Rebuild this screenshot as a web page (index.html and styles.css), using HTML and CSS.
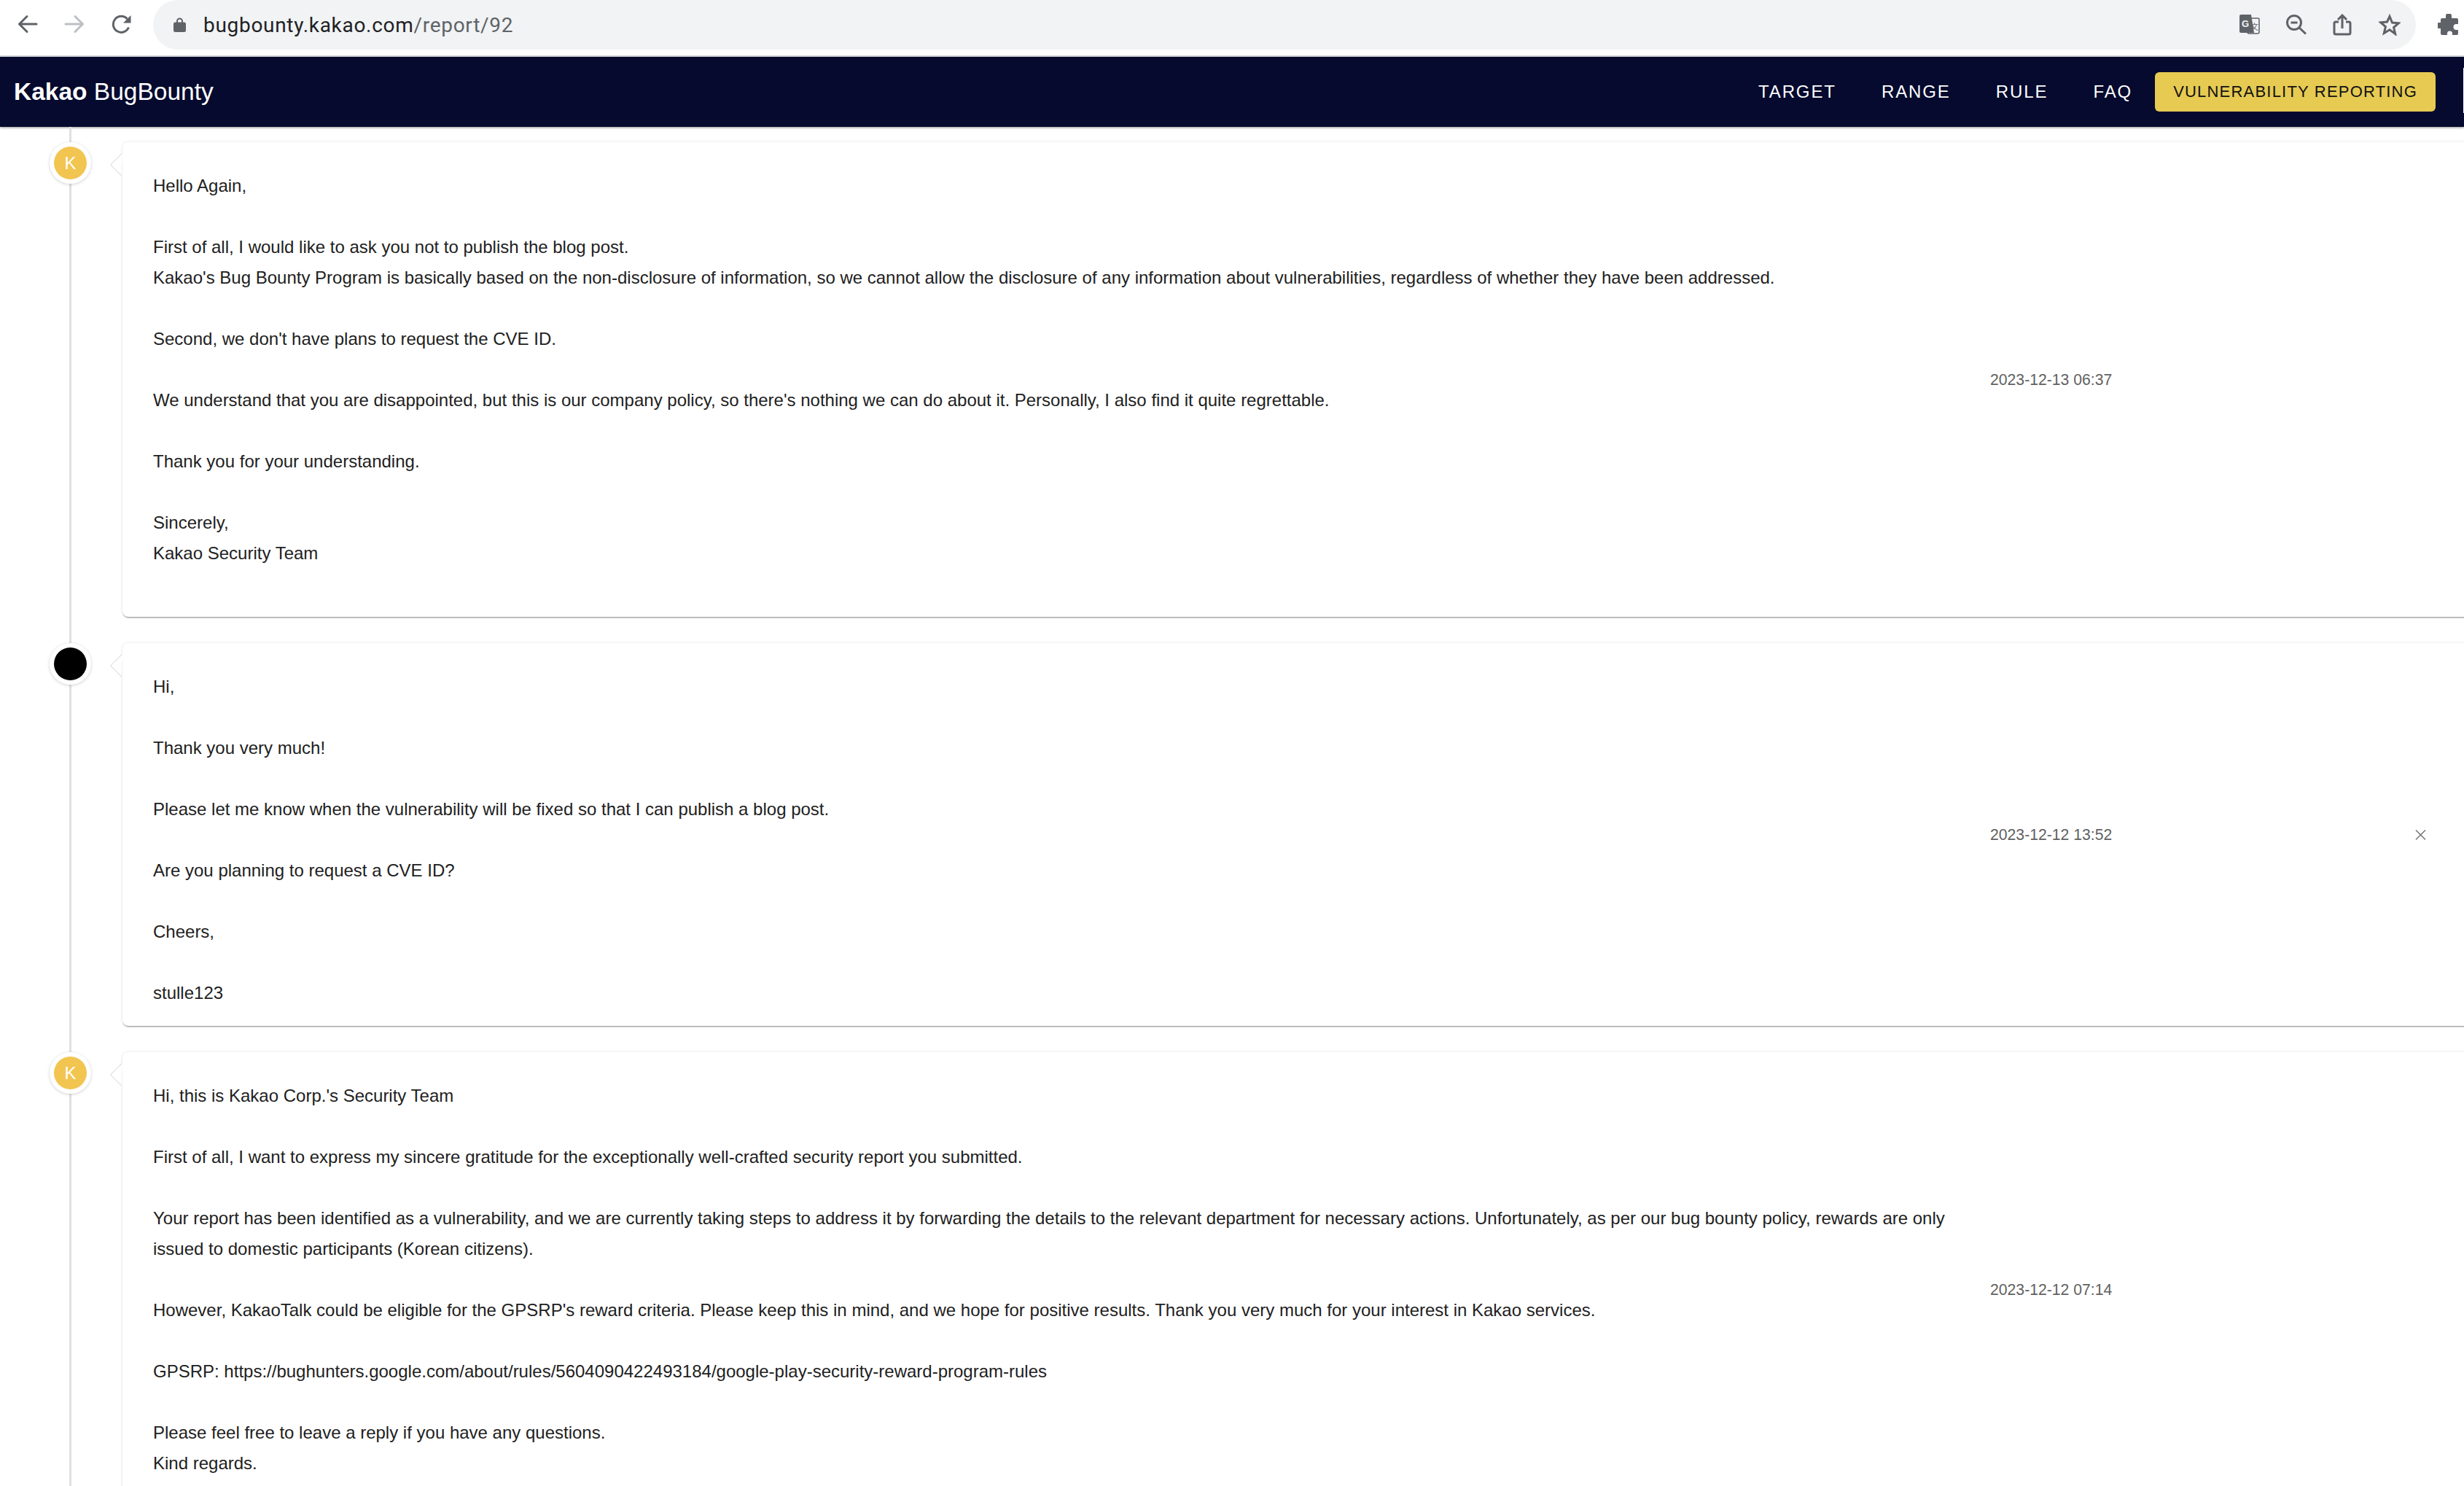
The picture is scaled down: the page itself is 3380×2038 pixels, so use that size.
FILE: index.html
```html
<!DOCTYPE html>
<html lang="en">
<head>
    <meta charset="UTF-8">
    <title>Kakao BugBounty</title>
    <link rel="stylesheet" href="styles.css">
</head>
<body>

    <!-- Browser toolbar -->
    <div class="toolbar">
        <svg class="tool-icon" viewBox="0 0 28 26"><path d="M26 13H2.500M13 2.500 2.500 13 13 23.500"/></svg>
        <svg class="tool-icon disabled" viewBox="0 0 28 26"><path d="M2 13h23.500M15 2.500 25.500 13 15 23.500"/></svg>
        <svg class="tool-icon" viewBox="0 0 28 26"><path d="M24.500 17.500A11 11 0 1 1 22.500 6"/><path class="solid" d="M27.500 1v10.500H17z"/></svg>
        <div class="address">
            <svg class="lock" viewBox="0 0 17 20"><path d="M4 8V5a4.500 4.500 0 0 1 9 0v3h-2V5a2.500 2.500 0 0 0-5 0v3z"/><rect y="6.500" width="17" height="13.500" rx="2.500"/></svg>
            <span class="url">bugbounty.kakao.com<span class="url-path">/report/92</span></span>
            <div class="address-icons">
                <svg class="addr-icon" viewBox="0 0 30 30">
                    <rect x="12" y="6" width="16" height="21" rx="2" class="outline"/>
                    <path class="solid" d="M3 1h14l4 25H3a2 2 0 0 1-2-2V3a2 2 0 0 1 2-2z"/>
                    <text x="4" y="18" class="g-mark">G</text>
                    <text x="16" y="22" class="x-mark">文</text>
                </svg>
                <svg class="addr-icon" viewBox="0 0 30 30"><circle cx="12" cy="12" r="9.500"/><path d="M7.500 12h9M19 19l9 8.500"/></svg>
                <svg class="addr-icon" viewBox="0 0 30 30"><path d="M9 11H5a2 2 0 0 0-2 2v13a2 2 0 0 0 2 2h18a2 2 0 0 0 2-2V13a2 2 0 0 0-2-2h-4M14 20V2M8 8l6-6 6 6"/></svg>
                <svg class="addr-icon" viewBox="0 0 30 30"><path d="m15 3.500 3.500 8.500 9 .7-6.900 5.900 2.100 8.900L15 21.800l-7.700 4.700 2.100-8.900-6.900-5.900 9-.7z"/></svg>
            </div>
        </div>
        <svg class="puzzle" viewBox="0 0 30 30"><path d="M11 3a4 4 0 0 1 8 0v3h7a2 2 0 0 1 2 2v6h-2.500a3.500 3.500 0 0 0 0 8H28v5a2 2 0 0 1-2 2h-6v-2a3.500 3.500 0 0 0-7 0v2H6a2 2 0 0 1-2-2v-7H2a4 4 0 0 1 0-8h2V8a2 2 0 0 1 2-2h5z"/></svg>
    </div>

    <!-- Site header -->
    <header class="nav">
        <a class="brand"><b>Kakao</b> BugBounty</a>
        <nav class="menu">
            <a class="menu-link">TARGET</a>
            <a class="menu-link">RANGE</a>
            <a class="menu-link">RULE</a>
            <a class="menu-link">FAQ</a>
            <a class="report-btn">VULNERABILITY REPORTING</a>
        </nav>
    </header>

    <!-- Replies -->
    <main class="timeline">

        <article class="item">
            <div class="avatar kakao">K</div>
            <div class="card">
                <div class="message">Hello Again,

First of all, I would like to ask you not to publish the blog post.
Kakao's Bug Bounty Program is basically based on the non-disclosure of information, so we cannot allow the disclosure of any information about vulnerabilities, regardless of whether they have been addressed.

Second, we don't have plans to request the CVE ID.

We understand that you are disappointed, but this is our company policy, so there's nothing we can do about it. Personally, I also find it quite regrettable.

Thank you for your understanding.

Sincerely,
Kakao Security Team
&nbsp;</div>
                <div class="time">2023-12-13 06:37</div>
            </div>
        </article>

        <article class="item">
            <div class="avatar user"></div>
            <div class="card">
                <div class="message">Hi,

Thank you very much!

Please let me know when the vulnerability will be fixed so that I can publish a blog post.

Are you planning to request a CVE ID?

Cheers,

stulle123</div>
                <div class="time">2023-12-12 13:52</div>
                <svg class="close" viewBox="0 0 15 14"><path d="M1 .5l13 13M14 .5l-13 13"/></svg>
            </div>
        </article>

        <article class="item">
            <div class="avatar kakao">K</div>
            <div class="card">
                <div class="message">Hi, this is Kakao Corp.'s Security Team

First of all, I want to express my sincere gratitude for the exceptionally well-crafted security report you submitted.

Your report has been identified as a vulnerability, and we are currently taking steps to address it by forwarding the details to the relevant department for necessary actions. Unfortunately, as per our bug bounty policy, rewards are only issued to domestic participants (Korean citizens).

However, KakaoTalk could be eligible for the GPSRP's reward criteria. Please keep this in mind, and we hope for positive results. Thank you very much for your interest in Kakao services.

GPSRP: https://bughunters.google.com/about/rules/5604090422493184/google-play-security-reward-program-rules

Please feel free to leave a reply if you have any questions.
Kind regards.
Kakao Security Team</div>
                <div class="time">2023-12-12 07:14</div>
            </div>
        </article>

    </main>

</body>
</html>
```

FILE: styles.css
```css
/* General */
html, body {
    height: 2038px;
    overflow: hidden;
}

body {
    margin: 0;
    background-color: #fff;
    font-family: 'Liberation Sans', Arial, sans-serif;
    color: #212121;
}

/* Browser toolbar */
.toolbar {
    display: flex;
    align-items: flex-start;
    height: 76px;
    padding-left: 24px;
    background-color: #fff;
    border-bottom: 2px solid #d6d9dd;
}

.tool-icon {
    flex: none;
    width: 28px;
    height: 26px;
    margin-top: 20px;
    margin-right: 36px;
    fill: none;
    stroke: #5f6368;
    stroke-width: 3;
    stroke-linecap: round;
    stroke-linejoin: round;
}

.tool-icon.disabled {
    stroke: #bcc0c4;
}

.tool-icon:nth-child(3) {
    margin-right: 30px;
    stroke-linecap: butt;
}

.tool-icon .solid {
    fill: #5f6368;
    stroke: none;
}

.address {
    flex: none;
    display: flex;
    align-items: center;
    width: 3104px;
    height: 68px;
    padding: 0 21px 0 28px;
    box-sizing: border-box;
    background-color: #f1f3f4;
    border-radius: 34px;
}

.lock {
    width: 17px;
    height: 20px;
    margin-right: 24px;
    fill: #5f6368;
}

.url {
    font-family: Roboto, sans-serif;
    font-size: 28px;
    letter-spacing: 0.7px;
    color: #202124;
}

.url-path {
    color: #5f6368;
}

.address-icons {
    display: flex;
    gap: 34px;
    margin-left: auto;
}

.addr-icon {
    width: 30px;
    height: 30px;
    fill: none;
    stroke: #5f6368;
    stroke-width: 3;
}

.addr-icon .solid {
    fill: #5f6368;
    stroke: none;
}

.addr-icon .outline {
    stroke-width: 1.5;
}

.g-mark {
    font-family: 'Liberation Sans', sans-serif;
    font-size: 13px;
    font-weight: 700;
    fill: #f1f3f4;
    stroke: none;
}

.x-mark {
    font-family: 'Noto Sans CJK SC', sans-serif;
    font-size: 11px;
    fill: #5f6368;
    stroke: none;
}

.puzzle {
    flex: none;
    width: 30px;
    height: 30px;
    margin-top: 19px;
    margin-left: 30px;
    fill: #5f6368;
}

/* Header */
.nav {
    position: relative;
    display: flex;
    align-items: center;
    justify-content: space-between;
    height: 96px;
    padding: 0 39px 0 19px;
    background-color: #050a2e;
    box-shadow: 0 1px 3px rgba(0, 0, 0, 0.45);
}

.nav::after {
    content: '';
    position: absolute;
    right: 0;
    top: 15px;
    width: 1px;
    height: 62px;
    background-color: #fff;
}

.brand {
    font-size: 33.5px;
    color: #fff;
}

.menu {
    display: flex;
    align-items: center;
}

.menu-link {
    margin-right: 62px;
    font-size: 24px;
    letter-spacing: 1.9px;
    color: #fff;
}

.menu-link:nth-child(4) {
    margin-right: 31px;
}

.report-btn {
    padding: 0 25px;
    height: 54px;
    line-height: 54px;
    font-size: 22px;
    letter-spacing: 1.2px;
    color: #111;
    background-color: #e6ca52;
    border-radius: 6px;
}

/* Timeline */
.timeline {
    position: relative;
    padding: 21px 0 0 68px;
}

.timeline::before {
    content: '';
    position: absolute;
    left: 95px;
    top: 0;
    width: 3px;
    height: 1900px;
    background-color: #e0e0e0;
}

.item {
    position: relative;
    display: flex;
    align-items: flex-start;
    gap: 43px;
    margin-bottom: 36px;
}

.avatar {
    position: relative;
    flex: none;
    width: 45px;
    height: 45px;
    margin: 6px;
    border-radius: 50%;
    font-size: 24px;
    line-height: 45px;
    text-align: center;
    color: #fff;
    box-shadow: 0 0 0 6px #fff, 0 1px 4px 6px rgba(0, 0, 0, 0.18);
}

.avatar.kakao {
    background-color: #f2c450;
}

.avatar.user {
    background-color: #000;
}

.card {
    position: relative;
    flex: 1;
    display: flex;
    align-items: center;
    margin-right: -20px;
    padding: 39px 0 24px 42px;
    background-color: #fff;
    border-radius: 8px;
    box-shadow: 0 2px 2px -1px rgba(0, 0, 0, 0.45), 0 0 4px rgba(0, 0, 0, 0.1);
}

/* Arrow toward the avatar */
.card::before {
    content: '';
    position: absolute;
    left: -11px;
    top: 20px;
    width: 22px;
    height: 22px;
    background-color: #fff;
    transform: rotate(45deg);
    box-shadow: -1px 1px 1px rgba(0, 0, 0, 0.14);
    clip-path: polygon(-10% -10%, -10% 110%, 100% 110%);
}

.message {
    flex: none;
    width: 2477px;
    font-size: 24px;
    line-height: 42px;
    white-space: pre-line;
}

.time {
    margin-left: 43px;
    margin-bottom: 15px;
    font-size: 21.2px;
    color: #616161;
}

.close {
    position: absolute;
    right: 72px;
    top: 256px;
    width: 15px;
    height: 14px;
    fill: none;
    stroke: #757575;
    stroke-width: 1.5;
}
```
